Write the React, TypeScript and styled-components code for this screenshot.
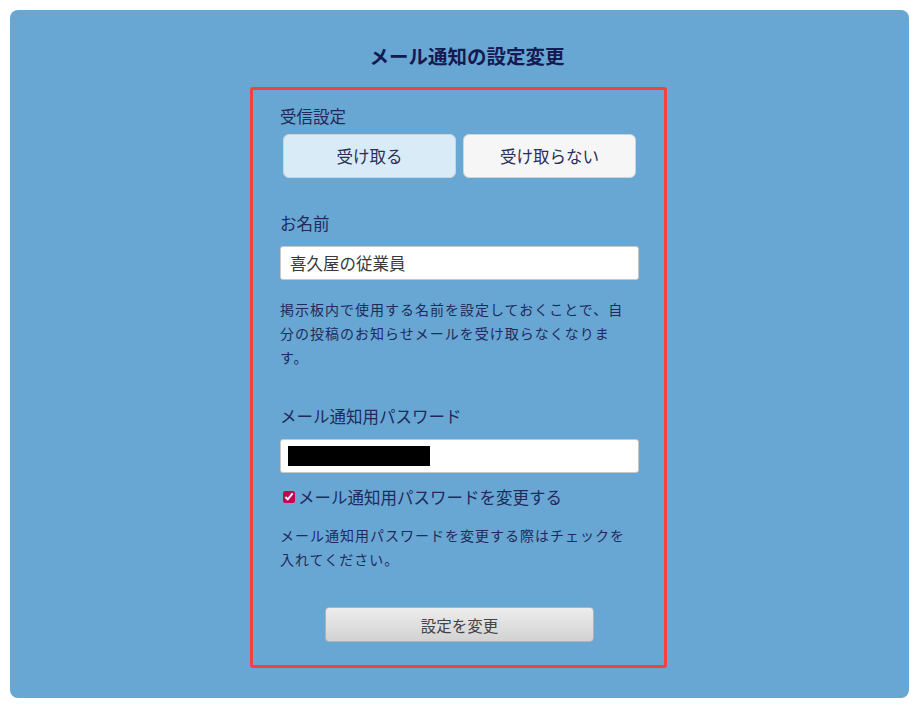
import React, { useState } from "react";
import styled, { createGlobalStyle } from "styled-components";

const Global = createGlobalStyle`
  html, body { margin: 0; padding: 0; background: #ffffff; }
  body { font-family: "Noto Sans CJK JP", "Noto Sans", sans-serif; }
  * { box-sizing: border-box; }
`;

const Page = styled.div`
  padding: 10px 10px 12px 10px;
`;

const Card = styled.div`
  background: #68a7d3;
  border-radius: 8px;
  padding: 31px 0 30px;
  display: flex;
  flex-direction: column;
  align-items: center;
`;

const Title = styled.h1`
  margin: 0 0 16px;
  padding-left: 15px;
  font-size: 19.5px;
  line-height: 30px;
  font-weight: 700;
  color: #141a52;
`;

const Frame = styled.div`
  width: 417px;
  margin-right: 2px;
  border: 3px solid #f4403f;
  border-radius: 3px;
  padding: 14px 25px 23px 27px;
  display: flex;
  flex-direction: column;
`;

const Label = styled.div<{ $mt?: number }>`
  margin-top: ${(p) => p.$mt ?? 0}px;
  font-size: 16.5px;
  line-height: 24px;
  color: #222a5c;
`;

const ToggleRow = styled.div`
  margin: 6px 3px 0;
  display: grid;
  grid-template-columns: 1fr 1fr;
  gap: 7px;
`;

const Toggle = styled.button<{ $active?: boolean }>`
  height: 44px;
  border: 1px solid #c9d4dc;
  border-radius: 6px;
  background: ${(p) => (p.$active ? "#d8ebf6" : "#f6f6f6")};
  font-family: inherit;
  font-size: 16.5px;
  color: #2a2f5a;
  cursor: pointer;
`;

const Field = styled.div`
  position: relative;
  margin-top: 11px;
`;

const TextInput = styled.input`
  display: block;
  width: 100%;
  height: 34px;
  border: 1px solid #c8c8c8;
  border-radius: 3px;
  background: #ffffff;
  padding: 0 9px;
  font-family: inherit;
  font-size: 16.5px;
  color: #3a3a3a;
  outline: none;
`;

const Redaction = styled.span`
  position: absolute;
  left: 8px;
  top: 7px;
  width: 142px;
  height: 20px;
  background: #000;
`;

const Help = styled.p<{ $mt: number }>`
  margin: ${(p) => p.$mt}px 0 0;
  padding-right: 12px;
  font-size: 14px;
  letter-spacing: 1px;
  line-height: 24px;
  color: #222a5c;
`;

const CheckRow = styled.label`
  margin-top: 12px;
  display: flex;
  align-items: center;
  gap: 3px;
  font-size: 16.5px;
  line-height: 24px;
  color: #222a5c;
  padding-left: 3px;
`;

const Check = styled.input`
  margin: 0;
  width: 12px;
  height: 12px;
  accent-color: #c2084e;
`;

const Submit = styled.button`
  align-self: center;
  margin-top: 36px;
  width: 269px;
  height: 35px;
  border: 1px solid #a9b4bc;
  border-radius: 4px;
  background: linear-gradient(#ededed, #d2d2d2);
  font-family: inherit;
  font-size: 15.5px;
  color: #444;
  cursor: pointer;
`;

export default function App() {
  const [receive, setReceive] = useState(true);
  const [checked, setChecked] = useState(true);
  return (
    <Page>
      <Global />
      <Card>
        <Title>メール通知の設定変更</Title>
        <Frame>
          <Label>受信設定</Label>
          <ToggleRow>
            <Toggle $active={receive} onClick={() => setReceive(true)}>
              受け取る
            </Toggle>
            <Toggle $active={!receive} onClick={() => setReceive(false)}>
              受け取らない
            </Toggle>
          </ToggleRow>
          <Label $mt={33}>お名前</Label>
          <Field>
            <TextInput type="text" defaultValue="喜久屋の従業員" />
          </Field>
          <Help $mt={17}>
            掲示板内で使用する名前を設定しておくことで、自分の投稿のお知らせメールを受け取らなくなります。
          </Help>
          <Label $mt={35}>メール通知用パスワード</Label>
          <Field>
            <TextInput type="text" defaultValue="" />
            <Redaction />
          </Field>
          <CheckRow>
            <Check
              type="checkbox"
              checked={checked}
              onChange={(e) => setChecked(e.target.checked)}
            />
            メール通知用パスワードを変更する
          </CheckRow>
          <Help $mt={14}>
            メール通知用パスワードを変更する際はチェックを入れてください。
          </Help>
          <Submit>設定を変更</Submit>
        </Frame>
      </Card>
    </Page>
  );
}
